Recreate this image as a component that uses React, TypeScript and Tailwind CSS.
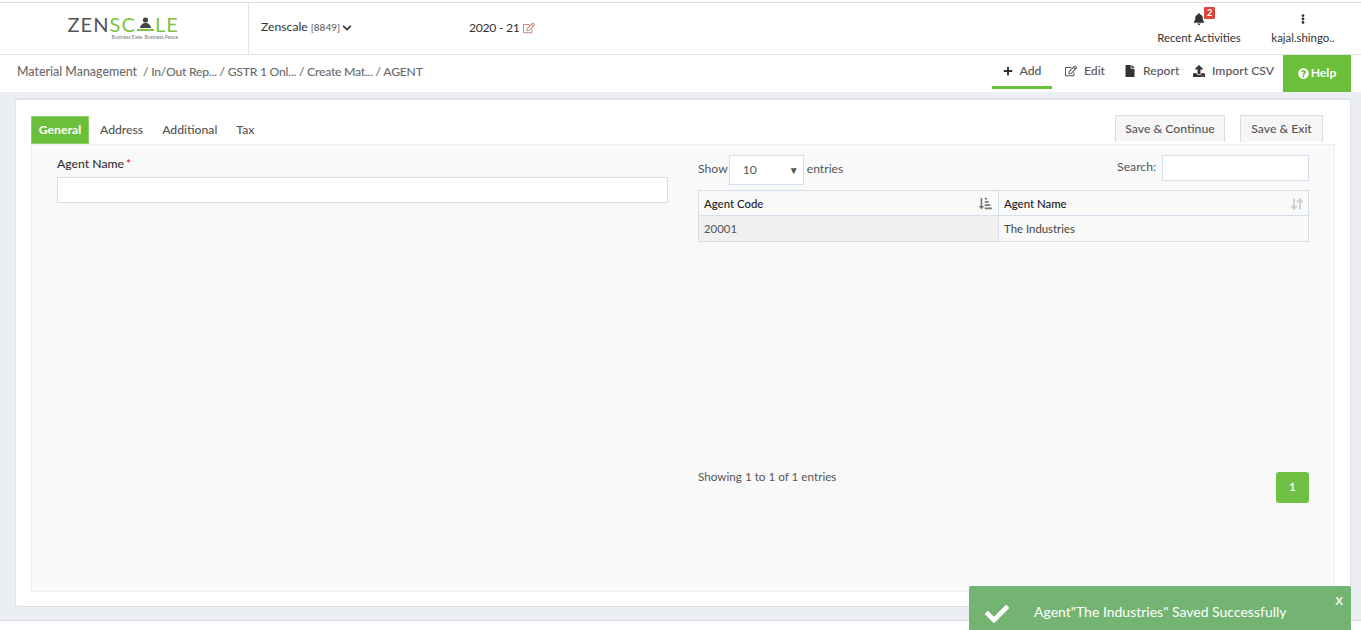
import React from 'react';
import { ArrowDownUp } from 'lucide-react';
import {
  FaBell,
  FaCheck,
  FaChevronDown,
  FaEllipsisV,
  FaFile,
  FaPlus,
  FaQuestionCircle,
  FaRegEdit,
  FaSortAmountDownAlt,
  FaUpload,
} from 'react-icons/fa';

const Logo: React.FC = () => (
  <div className="flex flex-col items-end w-[111px]">
    <div className="flex items-center h-[17px] text-[20px] leading-[17px] font-normal font-['Lato',sans-serif] tracking-[1.1px] text-[#555]">
      <span>ZEN</span>
      <span className="text-[#7dc242]">SC</span>
      <svg width="17" height="15" viewBox="0 0 17 15" className="mx-[1px]">
        <circle cx="8.5" cy="3" r="2.6" fill="#444" />
        <path d="M3 11c0-3 3-5 5.500-5S14 8 14 11z" fill="#444" />
        <rect x="0" y="12" width="17" height="2" fill="#7dc242" />
      </svg>
      <span className="text-[#7dc242]">LE</span>
    </div>
    <div className="text-[5px] leading-[7px] text-[#777] mt-[1px]">Business Ease. Business Peace.</div>
  </div>
);

const ActionLink: React.FC<{ icon: React.ReactNode; label: string; className: string }> = ({ icon, label, className }) => (
  <div className={`flex items-center h-full ${className}`}>
    {icon}
    <span>{label}</span>
  </div>
);

const App: React.FC = () => {
  return (
    <div className="relative h-[630px] overflow-hidden bg-[#ebeef3] font-['Lato',sans-serif] text-[12.2px] text-[#444]">
      <div className="h-[3px] bg-white border-b border-[#ddd]"></div>

      {/* top header */}
      <header className="flex h-[52px] bg-white border-b border-[#e4e4e4]">
        <div className="w-[249px] pl-[68px] pt-[13px] border-r border-[#e4e4e4] shrink-0">
          <Logo />
        </div>
        <div className="flex items-center w-[220px] pl-[12px] pb-[2px] shrink-0 text-[#333]">
          <span>Zenscale</span>
          <span className="ml-[3px] text-[10px] text-[#555]">[8849]</span>
          <FaChevronDown className="ml-[2px] mt-[1px] text-[10px]" />
        </div>
        <div className="flex items-center pb-[1px] text-[#333]">
          <span className="tracking-[-0.3px]">2020 - 21</span>
          <FaRegEdit className="ml-[4px] text-[12px] text-[#c98a7e]" />
        </div>
        <div className="ml-auto flex">
          <div className="flex flex-col items-center w-[100px] pt-[7px]">
            <div className="relative h-[17px]">
              <FaBell className="text-[12px] mt-[3px] text-[#333]" />
              <span className="absolute left-[11px] -top-[3px] w-[11px] h-[12px] bg-[#e0453a] rounded-[1px] text-white text-[9px] leading-[12px] font-bold text-center">2</span>
            </div>
            <span className="mt-[2px] text-[11.4px] leading-[18px] text-[#333]">Recent Activities</span>
          </div>
          <div className="flex flex-col items-center w-[96px] ml-[6px] mr-[10px] pt-[7px]">
            <div className="h-[17px]">
              <FaEllipsisV className="text-[10px] mt-[4px] text-[#333]" />
            </div>
            <span className="mt-[2px] text-[11.4px] leading-[18px] text-[#333]">kajal.shingo..</span>
          </div>
        </div>
      </header>

      {/* breadcrumb and actions */}
      <div className="flex h-[37px] bg-white pr-[10px]">
        <div className="flex items-center pl-[17px] pb-[2px] text-[#6b6b6b] whitespace-pre">
          <span className="font-medium text-[12.4px]">Material Management </span>
          <span className="font-medium tracking-[-0.25px]"> / In/Out Rep... / GSTR 1 Onl... / Create Mat... / AGENT</span>
        </div>
        <div className="ml-auto flex text-[#555] font-medium">
          <div className="w-[60px] mr-[13px] h-[34px] border-b-[3px] border-[#6abf3b] flex items-center justify-center pt-[1px]">
            <FaPlus className="text-[10px] text-[#333] mr-[7px]" />
            <span>Add</span>
          </div>
          <ActionLink className="w-[59px] pb-[5px]" icon={<FaRegEdit className="text-[12px] mr-[7px]" />} label="Edit" />
          <ActionLink className="w-[69px] pb-[5px]" icon={<FaFile className="text-[12px] text-[#333] mr-[7px]" />} label="Report" />
          <ActionLink className="w-[90px] pb-[5px]" icon={<FaUpload className="text-[12px] text-[#333] mr-[7px]" />} label="Import CSV" />
          <div className="w-[68px] bg-[#6abf3b] text-white font-bold flex items-center justify-center">
            <FaQuestionCircle className="text-[11px] mr-[2px]" />
            <span>Help</span>
          </div>
        </div>
      </div>

      {/* main card */}
      <main className="ml-[15px] mr-[10px] mt-[6px] h-[509px] bg-white border border-[#dfe1e6] border-t-[2px] rounded-[3px] pt-[16px] pl-[15px] pr-[15px]">
        <div className="flex h-[28px]">
          <div className="w-[58px] bg-[#6abf3b] border border-[#8fd06a] text-white font-bold flex items-center justify-center">General</div>
          <div className="ml-[11px] flex items-center font-medium text-[#555]">Address</div>
          <div className="ml-[19px] flex items-center font-medium text-[#555]">Additional</div>
          <div className="ml-[19px] flex items-center font-medium text-[#555]">Tax</div>
          <div className="ml-auto flex mr-[12px] -mt-[1px] h-[27px]">
            <button className="w-[110px] bg-[#f6f6f6] border border-b-0 border-[#d5dee8] text-[#555] font-medium">Save &amp; Continue</button>
            <button className="ml-[15px] w-[83px] bg-[#f6f6f6] border border-b-0 border-[#d5dee8] text-[#555] font-medium">Save &amp; Exit</button>
          </div>
        </div>

        <section className="flex h-[448px] bg-[#f9f9f9] border border-[#efefef]">
          <div className="w-[636px] pl-[25px] pt-[11px] shrink-0">
            <label className="block h-[21px] font-medium leading-[16px] text-[#333]">
              Agent Name<span className="ml-[2px] text-[#e02020]">*</span>
            </label>
            <input className="block w-[611px] h-[26px] bg-white border border-[#d5dfec]" />
          </div>

          <div className="w-[611px] ml-[30px] pt-[10px] shrink-0">
            <div className="flex h-[35px] text-[#555]">
              <span className="pt-[5px]">Show</span>
              <div className="ml-[1px] w-[75px] h-[30px] bg-white border border-[#d5dfec] flex items-center justify-between pl-[13px] pr-[4px]">
                <span>10</span>
                <span className="text-[10px] text-[#555]">▼</span>
              </div>
              <span className="ml-[3px] pt-[5px]">entries</span>
              <span className="ml-auto pt-[3px] mr-[6px] h-[20px]">Search:</span>
              <input className="w-[147px] h-[26px] bg-white border border-[#d5dfec]" />
            </div>

            <div className="grid grid-cols-[300px_311px] border border-[#d5dfec] text-[11.4px]">
              <div className="flex items-center justify-between h-[25px] pl-[5px] pr-[6px] pt-[1px] border-r border-b border-[#d5dfec] font-medium text-[#222]">
                <span>Agent Code</span>
                <FaSortAmountDownAlt className="text-[13px] text-[#777]" />
              </div>
              <div className="flex items-center justify-between h-[25px] pl-[5px] pr-[6px] pt-[1px] border-b border-[#d5dfec] font-medium text-[#222]">
                <span>Agent Name</span>
                <ArrowDownUp size={14} strokeWidth={3} className="text-[#ccc]" />
              </div>
              <div className="flex items-center h-[25px] pl-[5px] bg-[#f0f0f0] border-r border-[#d5dfec] text-[#555]">20001</div>
              <div className="flex items-center h-[25px] pl-[5px] text-[#444]">The Industries</div>
            </div>

            <div className="flex justify-between mt-[234px] text-[11.7px] text-[#555]">
              <span className="leading-[18px] -mt-[9px]">Showing 1 to 1 of 1 entries</span>
              <button className="w-[33px] h-[31px] -mt-[4px] bg-[#70c043] rounded-[3px] text-white font-bold text-[11px]">1</button>
            </div>
          </div>
        </section>
      </main>

      <div className="mt-[13px] h-[10px] bg-white border-t border-[#d8dbe0]"></div>

      {/* toast */}
      <div className="absolute right-[10px] bottom-0 w-[382px] h-[44px] bg-[#73b473] rounded-t-[2px] text-white flex items-start">
        <FaCheck className="ml-[16px] mt-[16px] text-[24px]" />
        <span className="ml-[25px] mt-[17px] text-[14px] leading-[18px]">Agent"The Industries" Saved Successfully</span>
        <span className="absolute right-[8px] top-[5px] text-[15px] leading-[16px] font-bold text-[#e4f0e4]">x</span>
      </div>
    </div>
  );
};

export default App;
